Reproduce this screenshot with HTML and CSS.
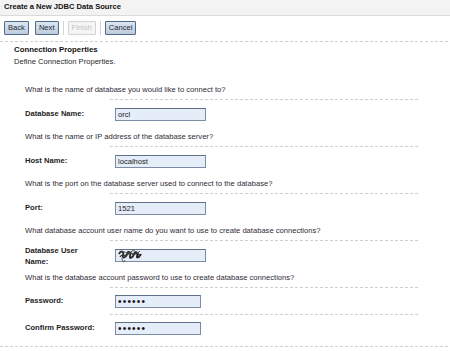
FILE: index.html
```html
<!DOCTYPE html>
<html lang="en">

<head>
    <meta charset="UTF-8" />
    <title>Create a New JDBC Data Source</title>
    <link rel="stylesheet" href="styles.css">
</head>

<body>

    <div class="titlebar">Create a New JDBC Data Source</div>

    <div class="toolbar">
        <button class="btn">Back</button>
        <button class="btn">Next</button>
        <span class="sep"></span>
        <button class="btn" disabled>Finish</button>
        <span class="sep"></span>
        <button class="btn">Cancel</button>
    </div>
    <div class="rule"></div>

    <div class="intro">
        <h2>Connection Properties</h2>
        <p>Define Connection Properties.</p>
    </div>

    <div class="form">
        <p class="question">What is the name of database you would like to connect to?</p>
        <div class="rule divider"></div>
        <div class="row">
            <label>Database Name:</label>
            <input class="field" type="text" value="orcl">
        </div>

        <p class="question">What is the name or IP address of the database server?</p>
        <div class="rule divider"></div>
        <div class="row">
            <label>Host Name:</label>
            <input class="field" type="text" value="localhost">
        </div>

        <p class="question">What is the port on the database server used to connect to the database?</p>
        <div class="rule divider"></div>
        <div class="row">
            <label>Port:</label>
            <input class="field" type="text" value="1521">
        </div>

        <p class="question">What database account user name do you want to use to create database connections?</p>
        <div class="rule divider"></div>
        <div class="row">
            <label class="two-line">Database User<br>Name:</label>
            <div class="field">
                <svg class="scribble" width="26" height="16" viewBox="0 0 26 16">
                    <path d="M2 6 C4 2 7 3 6 7 C5 11 9 10 10 6 C11 2 14 4 13 8 C12 11 16 10 17 6 C18 3 21 4 20 8 C19 11 23 9 24 6" fill="none" stroke="#222" stroke-width="1.8"/>
                    <path d="M3 9 C6 4 9 11 12 5 C14 2 16 10 19 5 C21 3 23 8 22 10" fill="none" stroke="#3a3a3a" stroke-width="1.4"/>
                    <path d="M4 4 C8 2 12 9 15 3 C18 1 20 7 23 3" fill="none" stroke="#555" stroke-width="1"/>
                    <path d="M5 10 C5 14 7 15 8 12" fill="none" stroke="#555" stroke-width="1"/>
                </svg>
            </div>
        </div>

        <p class="question">What is the database account password to use to create database connections?</p>
        <div class="rule divider"></div>
        <div class="row short">
            <label>Password:</label>
            <input class="field narrow" type="password" value="oracle">
        </div>
        <div class="rule divider"></div>
        <div class="row short">
            <label>Confirm Password:</label>
            <input class="field narrow" type="password" value="oracle">
        </div>
    </div>
    <div class="rule end"></div>

</body>

</html>
```

FILE: styles.css
```css
* {
    box-sizing: border-box;
    font-family: "Liberation Sans", Arial, sans-serif;
}

body {
    margin: 0;
    background: #fff;
    color: #222;
    font-size: 7.6px;
}

.titlebar {
    height: 16px;
    line-height: 13px;
    padding: 0 4px;
    background: #f3f3f3;
    border-bottom: 1px solid #dadada;
    font-weight: bold;
    color: #111;
}

.toolbar {
    display: flex;
    align-items: center;
    gap: 4px;
    padding: 5px 4px 6px;
}

.btn {
    height: 14px;
    padding: 0 3px;
    border: 1px solid #4d6a8b;
    border-radius: 1px;
    background: linear-gradient(#dde6f0, #bccbdc);
    color: #1c2a3c;
    font-size: 7.6px;
    line-height: 12px;
}

.btn:first-child {
    margin-right: 2px;
}

.btn:disabled {
    border-color: #d2d2d2;
    background: #f5f5f5;
    color: #c2c2c2;
}

.sep {
    width: 1px;
    height: 14px;
    background: #d4d4d4;
}

.rule {
    height: 1px;
    background: repeating-linear-gradient(to right, #cfcfcf 0 3px, transparent 3px 5px);
}

.intro {
    padding-left: 14px;
}

.intro h2 {
    margin: 2px 0 0;
    font-size: 7.8px;
    line-height: 12px;
    color: #111;
}

.intro p {
    margin: 0;
    line-height: 12px;
    color: #2a2a2a;
}

.form {
    padding: 13px 0 0 25px;
}

.question {
    margin: 3px 0 0;
    line-height: 12px;
    color: #2f2a36;
}

.divider {
    margin: 3px 0 0 85px;
    width: 308px;
}

.row + .divider {
    margin-top: 0;
}

.row {
    display: flex;
    align-items: center;
    height: 28px;
}

.row.short {
    height: 26px;
}

.row label {
    width: 90px;
    line-height: 12px;
    font-weight: bold;
    color: #1e1e1e;
}

.row label.two-line {
    line-height: 11px;
    padding-top: 2px;
}

.field {
    width: 91px;
    height: 13px;
    margin: 0;
    padding: 0 2px;
    border: 1px solid #7b8ca4;
    border-top-color: #5e6f88;
    background: #e5edf9;
    color: #222;
    font-size: 7.6px;
    line-height: 11px;
    overflow: visible;
}

.field.narrow {
    width: 86px;
    font-size: 10px;
    letter-spacing: 1.2px;
    color: #111;
}

.scribble {
    display: block;
    margin: -2px 0 0 -1px;
}

.end {
    margin-top: 5px;
}
```
